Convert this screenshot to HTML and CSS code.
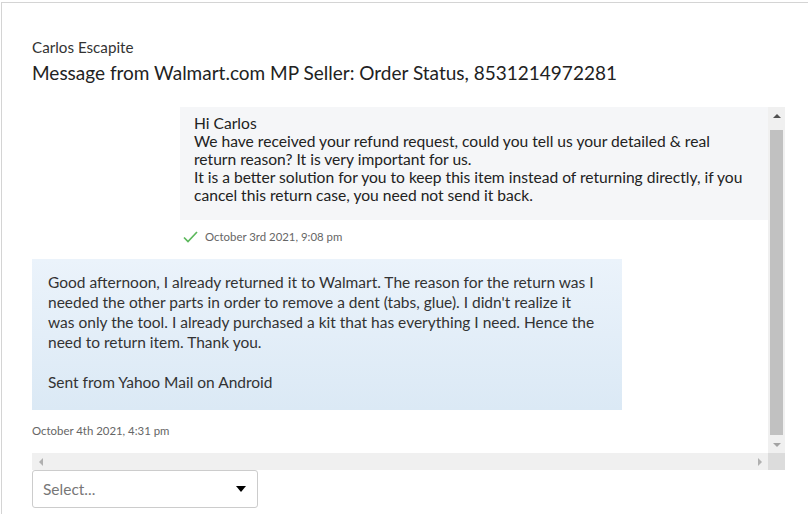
FILE: index.html
```html
<!DOCTYPE html>
<html lang="en">
<head>
<meta charset="utf-8">
<title>Message</title>
<link rel="stylesheet" href="styles.css">
</head>
<body>
<div class="panel">
  <header class="head">
    <div class="from">Carlos Escapite</div>
    <h1 class="subject">Message from Walmart.com MP Seller: Order Status, 8531214972281</h1>
  </header>
  <div class="thread">
    <div class="viewport">
      <div class="thread-inner">
        <div class="msg msg-out">
          <div class="bubble bubble-out">Hi Carlos<br>We have received your refund request, could you tell us your detailed &amp; real<br>return reason? It is very important for us.<br>It is a better solution for you to keep this item instead of returning directly, if you<br>cancel this return case, you need not send it back.</div>
          <div class="meta meta-out">
            <svg class="check" width="15" height="12" viewBox="0 0 15 12"><polyline points="1,6.5 5,10.5 14,1" fill="none" stroke="#5cb85c" stroke-width="1.7"/></svg>
            <span>October 3rd 2021, 9:08 pm</span>
          </div>
        </div>
        <div class="msg msg-in">
          <div class="bubble bubble-in">Good afternoon, I already returned it to Walmart. The reason for the return was I<br>needed the other parts in order to remove a dent (tabs, glue). I didn't realize it<br>was only the tool. I already purchased a kit that has everything I need. Hence the<br>need to return item. Thank you.<br><br>Sent from Yahoo Mail on Android</div>
          <div class="meta meta-in"><span>October 4th 2021, 4:31 pm</span></div>
        </div>
      </div>
    </div>
    <div class="vbar">
      <div class="sb-btn arrow-up"></div>
      <div class="vtrack"><div class="vthumb"></div></div>
      <div class="sb-btn arrow-down"></div>
    </div>
    <div class="hbar">
      <div class="sb-btn arrow-left"></div>
      <div class="sb-btn arrow-right"></div>
    </div>
    <div class="corner"></div>
  </div>
  <div class="select">
    <span class="select-placeholder">Select...</span>
    <span class="caret"></span>
  </div>
</div>
</body>
</html>
```
FILE: styles.css
```css
html, body {
  margin: 0;
  padding: 0;
  background: #fff;
}
body {
  font-family: Lato, "Open Sans", sans-serif;
  color: #333;
  overflow: hidden;
}
.panel {
  box-sizing: border-box;
  margin: 2px 0 0 1px;
  border-top: 1px solid #d4d4d4;
  border-left: 1px solid #d4d4d4;
  padding: 34px 0 0 30px;
  height: 512px;
}
.head {
  margin-bottom: 22px;
}
.from {
  font-size: 15.2px;
  line-height: 20px;
  color: #333;
}
.subject {
  margin: 4px 0 0;
  font-size: 19px;
  line-height: 24px;
  font-weight: normal;
  color: #222;
}
.thread {
  width: 753px;
  height: 363px;
  display: grid;
  grid-template-columns: 1fr 17px;
  grid-template-rows: 1fr 17px;
}
.viewport {
  overflow: hidden;
  display: flex;
  flex-direction: column-reverse;
}
.vbar {
  background: #f0f0f0;
  display: flex;
  flex-direction: column;
}
.vtrack {
  flex: 1;
  display: flex;
  flex-direction: column;
  padding: 6px 2px 1px;
}
.vthumb {
  flex: 1;
  background: #c1c1c1;
}
.hbar {
  background: #f0f0f0;
  display: flex;
  justify-content: space-between;
}
.corner {
  background: #dcdcdc;
}
.sb-btn {
  width: 17px;
  height: 17px;
  display: flex;
  align-items: center;
  justify-content: center;
}
.sb-btn::before {
  content: "";
  width: 0;
  height: 0;
}
.arrow-up::before {
  border-left: 4px solid transparent;
  border-right: 4px solid transparent;
  border-bottom: 4px solid #505050;
}
.arrow-down::before {
  border-left: 4px solid transparent;
  border-right: 4px solid transparent;
  border-top: 4px solid #a3a3a3;
}
.arrow-left::before {
  border-top: 4px solid transparent;
  border-bottom: 4px solid transparent;
  border-right: 4px solid #b0b0b0;
}
.arrow-right::before {
  border-top: 4px solid transparent;
  border-bottom: 4px solid transparent;
  border-left: 4px solid #b0b0b0;
}
.thread-inner {
  padding: 2px 0 14px;
  display: flex;
  flex-direction: column;
}
.bubble {
  white-space: nowrap;
}
.msg-out {
  display: flex;
  flex-direction: column;
  align-items: flex-start;
  margin-left: 148px;
}
.bubble-out {
  align-self: stretch;
  background: #f5f6f8;
  padding: 12px 14px 16px;
  font-size: 15.6px;
  line-height: 18px;
  color: #222;
}
.meta {
  display: flex;
  align-items: center;
  gap: 7px;
  font-size: 11.4px;
  line-height: 16px;
  color: #666;
}
.meta-out {
  margin-top: 9px;
  padding-left: 3px;
}
.check {
  display: block;
}
.msg-in {
  margin-top: 14px;
  display: flex;
  flex-direction: column;
  align-items: flex-start;
}
.bubble-in {
  width: 558px;
  padding: 13px 16px 18px;
  background: linear-gradient(#ebf3fb, #dbe9f5);
  font-size: 15.5px;
  line-height: 20px;
  color: #333;
}
.meta-in {
  margin-top: 13px;
}
.select {
  box-sizing: border-box;
  width: 226px;
  height: 38px;
  border: 1px solid #cccccc;
  border-radius: 3px;
  display: flex;
  align-items: center;
  justify-content: space-between;
  padding: 0 11px 0 10px;
  font-size: 15.5px;
  color: #777;
}
.caret {
  width: 0;
  height: 0;
  border-left: 5px solid transparent;
  border-right: 5px solid transparent;
  border-top: 6px solid #000;
}
```
